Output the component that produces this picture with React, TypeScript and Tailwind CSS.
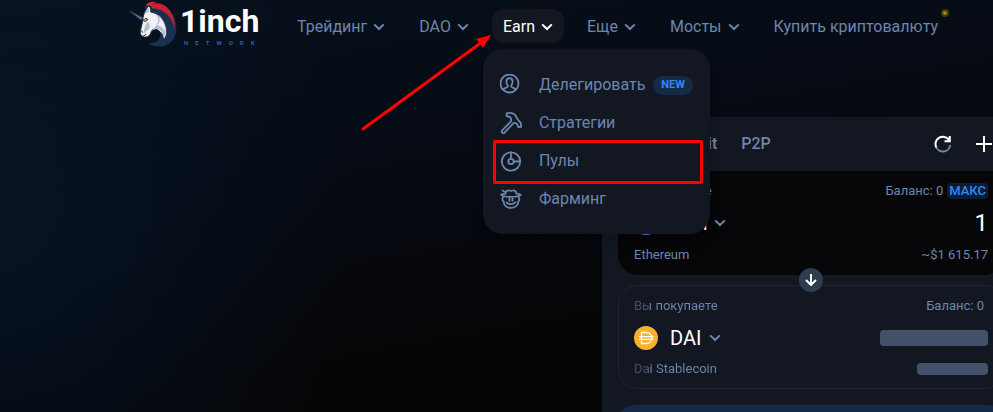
import type { ReactNode } from "react";

function Chevron({ className = "" }: { className?: string }) {
  return (
    <svg viewBox="0 0 12 8" className={`h-2 w-3 shrink-0 ${className}`} fill="none" stroke="currentColor" strokeWidth="2" aria-hidden="true">
      <path d="M1.200 1.400 6 6l4.800-4.600" />
    </svg>
  );
}

function Unicorn() {
  return (
    <svg viewBox="15 3 150 150" className="h-[50px] w-[50px] shrink-0" aria-hidden="true">
      <path d="M58 24C74 8 100 6 120 20c24 16 36 44 34 72-3 32-24 52-54 50-14 0-24-4-30-10 22 2 36-8 36-26 0-8-2-14-6-20z" fill="#1b2f4e" />
      <path d="M78 18c20-10 44-2 58 20 10 16 14 32 13 52-5-22-14-38-30-50-12-9-26-12-38-12z" fill="#c8232c" />
      <path d="M62 18c8-8 18-11 32-9-8 3-14 7-18 13z" fill="#e0282e" />
      <path d="M84 34c20 0 36 10 47 27 7 13 10 25 8 40-5-20-14-36-28-48-8-7-16-12-27-14z" fill="#1b2f4e" />
      <path d="m12 35 40 20-4 8z" fill="#8493af" stroke="#263b5c" strokeWidth="3" />
      <path d="m28 42 3 7m4-4 3 8m4-4 3 8" stroke="#263b5c" strokeWidth="2.500" />
      <path d="M72 20c5 8 6 13 5 19 24 4 40 20 46 44 4 16 3 28-8 40 1-10-2-18-9-24-6-6-12-9-18-9-6 1-8 5-10 10-3 9-10 16-20 14-9-2-14-10-12-18l7-29C54 50 58 36 72 20z" fill="#eef1f6" stroke="#1b2f4e" strokeWidth="3" />
      <path d="M90 44c10 9 12 20 6 31-4 8-10 13-14 20 10-7 18-6 26 1 5 5 8 11 8 19 6-10 7-20 4-32-4-18-14-31-30-39z" fill="#b4bfd0" />
      <path d="M102 54c12 11 18 24 18 42-7-10-14-15-23-17 8-8 9-16 5-25z" fill="#eef1f6" />
      <path d="m70 26-10 17 11-4z" fill="#a4b0c4" />
      <path d="M67 68c8 6 9 14 5 23-7 3-12 8-16 14-1-11 3-22 11-37z" fill="#b5c0d0" />
      <path d="m52 63 12-7 6 6-10 7z" fill="#1b2f4e" />
      <path d="m56 62 7-3 3 3-6 4z" fill="#f5c400" />
      <path d="M45 96c5-2 8 1 7 5m-4 10c6 2 12-1 15-6" fill="none" stroke="#1b2f4e" strokeWidth="3" />
    </svg>
  );
}

function LineIcon({ children }: { children: ReactNode }) {
  return (
    <svg viewBox="0 0 22 22" className="h-[22px] w-[22px] shrink-0" fill="none" stroke="currentColor" strokeWidth="1.800" strokeLinejoin="round" strokeLinecap="round" aria-hidden="true">
      {children}
    </svg>
  );
}

const delegateIcon = (
  <LineIcon>
    <circle cx="9.500" cy="9.500" r="9" />
    <path d="M9.500 4.200c2 0 3.100 1.400 3.100 3.500 0 1.700-.5 2.900-1.300 3.700-.4.900 0 1.500.8 1.900l3.100 1.600M9.500 4.200c-2 0-3.100 1.400-3.100 3.500 0 1.700.5 2.900 1.300 3.700.4.900 0 1.500-.8 1.900l-3.100 1.600" />
  </LineIcon>
);

const hammerIcon = (
  <LineIcon>
    <path d="M6.500 1.400C9.500.6 13 1 15.400 3.200l1.500 3 4 5.200.2 3.400-2.700.2-1.600-3.300-2.200-1-1.400.7-8.700 9.300c-1.600 1.300-3.600-.7-2.300-2.300l9-9.300-.2-2.900C9.900 4.800 8.500 4.200 6.600 4z" />
  </LineIcon>
);

const poolIcon = (
  <LineIcon>
    <circle cx="11" cy="11.500" r="9.200" />
    <circle cx="11" cy="11.500" r="2.700" />
    <path d="M11 2.500v6.300M13.700 11.500H20" />
  </LineIcon>
);

const farmerIcon = (
  <LineIcon>
    <path d="M1.200 6.800c3 2.700 16.400 2.800 19.600.1-1.400-1-2.800-1.300-4.300-1.300C15.900 3.200 14.500 2 13 2.500c-1.200.5-2.600.5-4 0C7.200 2 6 3.100 5.600 5.600c-1.600 0-3 .2-4.400 1.200zM4.800 3.800 2.600 2.400" />
    <path d="M3 9.400c-1 1.700-.6 3.300.6 4 .6 8.600 14 8.900 14.800 0 .9-.7 1.200-2.300.4-4M9.500 10.400v2.400M12.500 10.400v2.400M6.600 14.400c1.900 2.400 6.700 2.400 8.800-.2" />
  </LineIcon>
);

function MenuItem({ icon, label, badge, outlined }: { icon: ReactNode; label: string; badge?: string; outlined?: boolean }) {
  return (
    <li className="relative">
      <a href="#" className="flex h-[38px] items-center gap-[17px] pl-[17px] text-[#6c86ad]">
        {icon}
        <span className="flex items-center gap-2">
          {label}
          {badge && (
            <span className="flex h-[19px] items-center rounded-full bg-[#152a46] px-2 text-[11px] font-bold text-[#2f8af5]">{badge}</span>
          )}
        </span>
      </a>
      {outlined && <span className="pointer-events-none absolute -top-0.5 right-[7px] -bottom-1 left-2.5 rounded-[2px] border-3 border-[#ff0000]" />}
    </li>
  );
}

function NavButton({ label, active }: { label: string; active?: boolean }) {
  return (
    <button
      type="button"
      aria-expanded={!!active}
      className={`flex h-[34px] items-center gap-1.5 rounded-xl px-[11px] pt-0.5 ${active ? "bg-[#141720] text-white" : "text-[#6c86ad]"}`}
    >
      {label}
      <Chevron />
    </button>
  );
}

function Header() {
  return (
    <header className="relative z-10 flex h-[52px] items-center pl-[130px]">
      <a href="#" aria-label="1inch Network" className="flex shrink-0 self-start text-white">
        <Unicorn />
        <span className="flex w-20 flex-col pt-0.5">
          <span className="text-[32px] leading-[38px] font-bold">1inch</span>
          <span className="pl-1 text-[6px] leading-[6px] font-bold tracking-[7px] text-[#2560b0]">NETWORK</span>
        </span>
      </a>
      <nav className="ml-[26px]">
        <ul className="flex items-center gap-3 whitespace-nowrap">
          <li><NavButton label="Трейдинг" /></li>
          <li><NavButton label="DAO" /></li>
          <li className="relative">
            <NavButton label="Earn" active />
            <ul className="absolute top-10 -left-[9px] w-[227px] rounded-[20px] bg-[#131721] pt-[17px] pb-4 shadow-lg">
              <MenuItem icon={delegateIcon} label="Делегировать" badge="NEW" />
              <MenuItem icon={hammerIcon} label="Стратегии" />
              <MenuItem icon={poolIcon} label="Пулы" outlined />
              <MenuItem icon={farmerIcon} label="Фарминг" />
            </ul>
          </li>
          <li><NavButton label="Еще" /></li>
          <li><NavButton label="Мосты" /></li>
          <li className="relative pt-0.5">
            <a href="#" className="px-[11px] text-[#6c86ad]">Купить криптовалюту</a>
            <span className="absolute -top-1 right-0 h-2 w-2 rounded-full border-2 border-[#453713] bg-[#a78113]" />
          </li>
        </ul>
      </nav>
      <svg viewBox="0 0 132 98" className="pointer-events-none absolute top-[33px] left-[361px] h-[98px] w-[132px]" aria-hidden="true">
        <path d="m2 96 119-87" stroke="#f00" strokeWidth="3" strokeLinecap="round" />
        <path d="m130 2-15 4 7 9z" fill="#f00" />
      </svg>
    </header>
  );
}

const fadedLabel = "bg-[linear-gradient(90deg,#435069_14px,#6c86ad_14px)] bg-clip-text text-transparent";

function SwapPanel() {
  return (
    <section className="-mr-[27px] ml-auto w-[418px] bg-[#131721] px-4 text-[13px] leading-4 text-[#6c86ad]">
      <div className="flex h-[54px] items-center justify-between text-[16px] font-medium">
        <div className="flex gap-6">
          <button type="button">Swap</button>
          <button type="button">Limit</button>
          <button type="button">P2P</button>
        </div>
        <div className="flex items-center gap-6 pr-3 text-white">
          <button type="button" aria-label="Обновить">
            <svg viewBox="0 0 18 18" className="h-[18px] w-[18px]" fill="none" strokeWidth="2" aria-hidden="true">
              <path d="M2 11.500a7.300 7.300 0 0 0 14.200-1.500" stroke="#6c86ad" />
              <path d="M2.200 12.500C0 7 3.500 1.800 8.800 1.700c2.700 0 4.700 1.100 6.200 3.300M15.800 1v5.300h-5.300" stroke="currentColor" />
            </svg>
          </button>
          <button type="button" aria-label="Добавить">
            <svg viewBox="0 0 16 16" className="h-4 w-4" fill="none" stroke="currentColor" strokeWidth="2" aria-hidden="true">
              <path d="M8 0v16M0 8h16" />
            </svg>
          </button>
        </div>
      </div>

      <div className="flex h-[104px] flex-col justify-between rounded-b-[20px] bg-[#060608] px-4 pt-3 pb-3">
        <div className="flex items-center justify-between">
          <span>Вы продаете</span>
          <span className="flex items-center gap-1">
            Баланс: 0
            <button type="button" className="h-4 rounded bg-[#0b1c33] px-0.5 font-medium text-[#2f8af5]">МАКС</button>
          </span>
        </div>
        <div className="flex h-6 items-center justify-between">
          <button type="button" className="flex items-center text-[20px] text-white">
            <span className="mr-3 h-6 w-6 rounded-full bg-[#627eea]" />
            ETH
            <Chevron className="ml-1.5 text-[#6c86ad]" />
          </button>
          <span className="text-[24px] text-white">1</span>
        </div>
        <div className="flex items-center justify-between">
          <span>Ethereum</span>
          <span>~$1 615.17</span>
        </div>
      </div>

      <div className="relative z-[1] -my-[7px] flex justify-center">
        <button type="button" aria-label="Поменять местами" className="flex h-6 w-6 items-center justify-center rounded-full bg-[#2f3d51] text-white">
          <svg viewBox="0 0 12 12" className="h-3 w-3" fill="none" stroke="currentColor" strokeWidth="2" aria-hidden="true">
            <path d="M6 0v10.500M1 6l5 5 5-5" />
          </svg>
        </button>
      </div>

      <div className="flex h-[104px] flex-col justify-between rounded-[20px] border border-[#1d2432] px-[15px] pt-3 pb-[11px]">
        <div className="flex items-center justify-between">
          <span className={fadedLabel}>Вы покупаете</span>
          <span className="pr-1">Баланс: 0</span>
        </div>
        <div className="flex h-6 items-center justify-between">
          <button type="button" className="flex items-center text-[20px] text-white">
            <svg viewBox="0 0 24 24" className="mr-3 h-6 w-6" fill="none" stroke="#fff" strokeWidth="1.300" aria-hidden="true">
              <circle cx="12" cy="12" r="12" fill="#f9b02f" stroke="none" />
              <path d="M7.500 6.500h4.700c7.500 0 7.500 11 0 11H7.500zM5 10.600h14.500M5 13.400h14.500" />
            </svg>
            DAI
            <Chevron className="ml-2 text-[#6c86ad]" />
          </button>
          <span className="h-4 w-[108px] rounded bg-[#43516b]" />
        </div>
        <div className="flex items-center justify-between">
          <span className={fadedLabel}>Dai Stablecoin</span>
          <span className="h-3 w-[71px] rounded bg-[#43516b]" />
        </div>
      </div>

      <button type="button" aria-label="Подключить кошелек" className="mt-4 h-[52px] w-full rounded-2xl bg-[#152a46]" />
    </section>
  );
}

export default function App() {
  return (
    <div className="h-screen overflow-hidden bg-[radial-gradient(ellipse_35%_110%_at_0%_50%,#071424_0%,transparent_100%),linear-gradient(170deg,#07111c_0%,#060b15_35%,#050507_72%)] font-[Roboto,'Liberation_Sans',sans-serif] text-[16px]">
      <Header />
      <main className="pt-[65px]">
        <SwapPanel />
      </main>
    </div>
  );
}
